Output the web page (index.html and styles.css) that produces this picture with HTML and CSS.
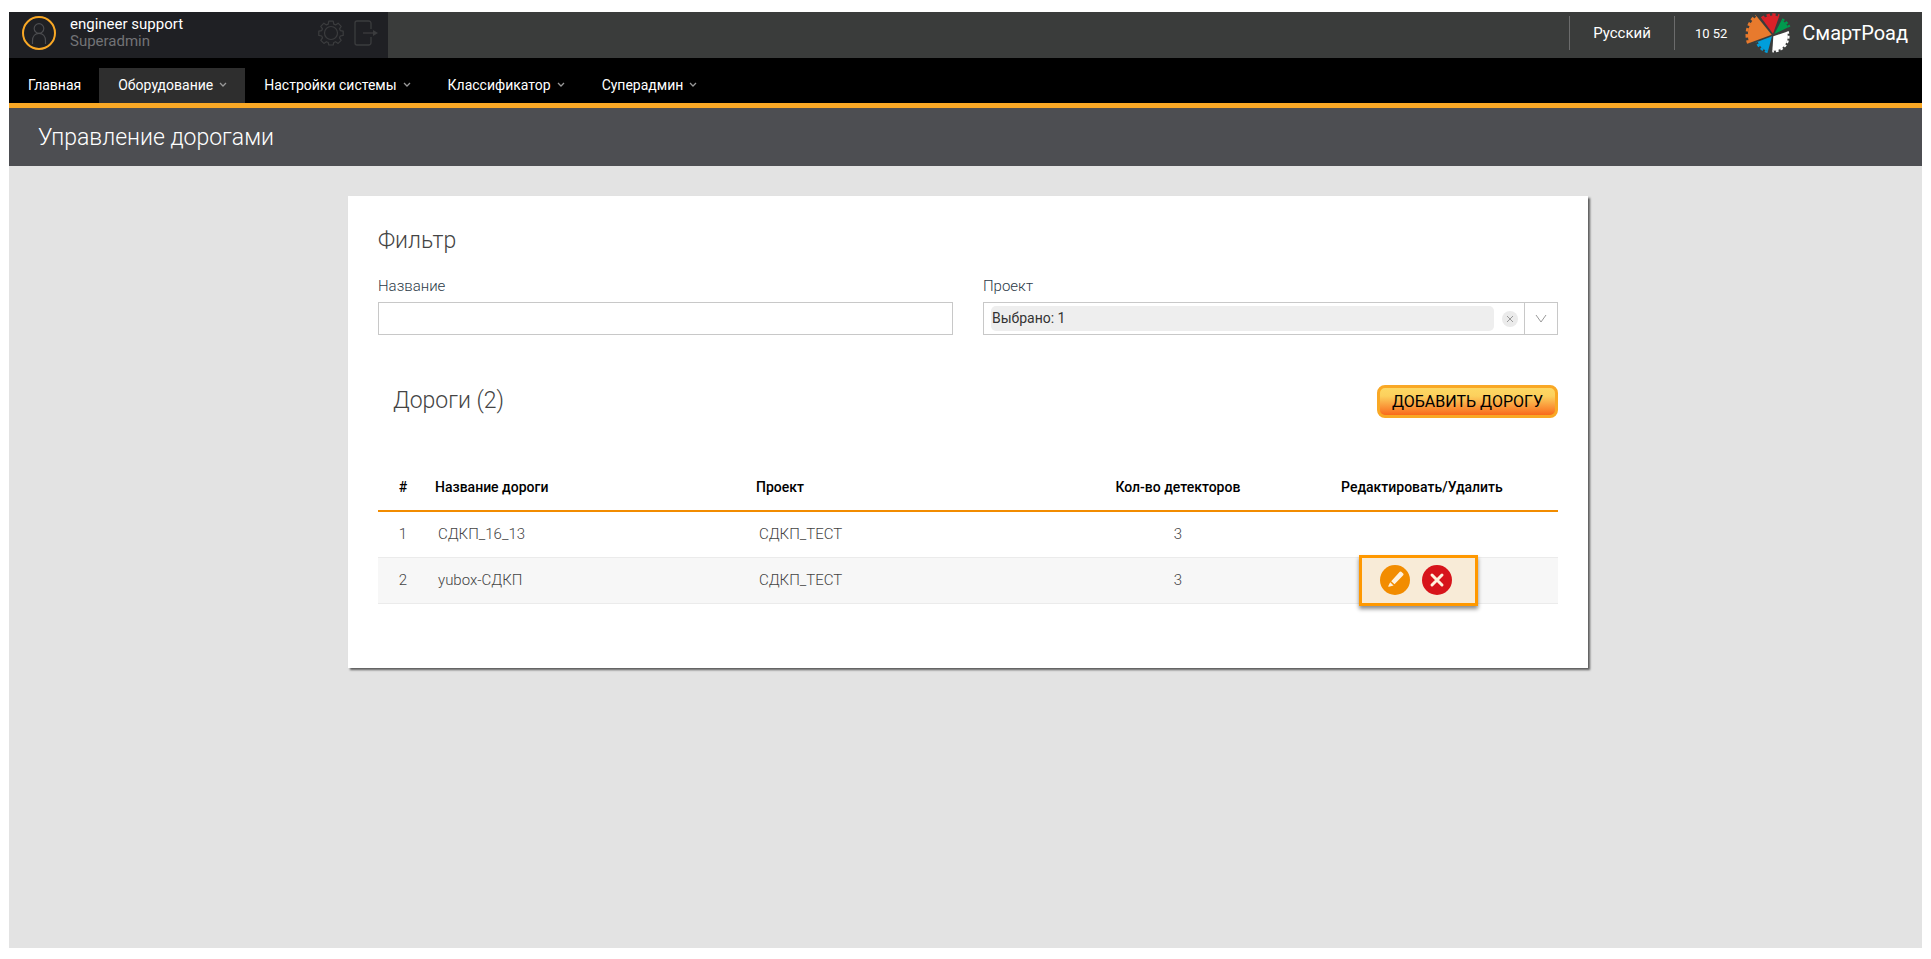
FILE: index.html
```html
<!DOCTYPE html>
<html lang="ru">
<head>
<meta charset="utf-8">
<title>Управление дорогами</title>
<link rel="stylesheet" href="styles.css">
</head>
<body>
<div class="page">
  <header class="topbar">
    <div class="user">
      <svg class="avatar" viewBox="0 0 34 34" width="34" height="34" fill="none" aria-hidden="true">
        <circle cx="17" cy="17" r="16" stroke="#f9a825" stroke-width="2"/>
        <g stroke="#4c4d50" stroke-width="1.2"><circle cx="17" cy="12.5" r="4.8"/><path d="M10.5 28v-3.200c0-4.500 2.700-7.500 6.500-7.500s6.500 3 6.500 7.500V28"/></g>
      </svg>
      <div class="user-text">
        <div class="user-name">engineer support</div>
        <div class="user-role">Superadmin</div>
      </div>
      <button class="icon-btn" type="button" aria-label="Настройки">
        <svg viewBox="0 0 26 26" width="26" height="26" fill="none" stroke="#3b3c3e" stroke-width="1.2" stroke-linejoin="round">
          <circle cx="13" cy="13" r="6.500"/>
          <path d="M10.800 1.200h4.400l.6 2.900 1.800.8 2.500-1.700 3.100 3.100-1.700 2.500.8 1.800 2.900.6v4.200l-2.900.6-.8 1.800 1.700 2.500-3.100 3.100-2.500-1.700-1.800.8-.6 2.500h-4.400l-.6-2.500-1.800-.8-2.500 1.700-3.100-3.100 1.700-2.500-.8-1.800-2.900-.6v-4.200l2.900-.6.8-1.800-1.700-2.500 3.100-3.100 2.500 1.700 1.800-.8z"/>
        </svg>
      </button>
      <button class="icon-btn" type="button" aria-label="Выход">
        <svg viewBox="0 0 26 26" width="26" height="26" fill="none" stroke="#3b3c3e" stroke-width="1.300">
          <path d="M18 9V3.500Q18 1 15.500 1H4Q2 1 2 3v20q0 2 2 2h11.500q2.500 0 2.500-2.500V17"/>
          <path d="M10 13h11"/><path d="M20 10l5 3-5 3z" fill="#3b3c3e" stroke="none"/>
        </svg>
      </button>
    </div>
    <button class="lang" type="button">Русский</button>
    <time class="clock" datetime="10:52">10 52</time>
    <a class="brand" href="#">
      <svg viewBox="0 0 141 120" width="47" height="40" fill="none" aria-hidden="true">
        <path d="M80 65L13 90A71 71 0 0 1 35 10z" fill="#e87a2d"/>
        <path d="M10 91A74 74 0 0 1 33 8" stroke="#e87a2d" stroke-width="8" stroke-dasharray="10 8"/>
        <path d="M84 62L52 19A54 54 0 0 1 102 11z" fill="#da2128"/>
        <path d="M50 16A57 57 0 0 1 103 8" stroke="#da2128" stroke-width="8" stroke-dasharray="10 7"/>
        <path d="M88 63L110 21A47 47 0 0 1 130 43z" fill="#009a4e"/>
        <path d="M111 19A50 50 0 0 1 133 42" stroke="#009a4e" stroke-width="7" stroke-dasharray="8 5"/>
        <path d="M85 70L126 56A43 43 0 0 1 82 113z" fill="#fff"/>
        <path d="M128 55A45 45 0 0 1 82 115" stroke="#fff" stroke-width="6" stroke-dasharray="8 6"/>
        <path d="M81 70L69 114A46 46 0 0 1 38 86z" fill="#009edb"/>
        <path d="M68 117A49 49 0 0 1 35 87" stroke="#009edb" stroke-width="7" stroke-dasharray="9 6"/>
      </svg>
      <span>СмартРоад</span>
    </a>
  </header>

  <nav class="nav">
    <a class="nav-item" href="#">Главная</a>
    <a class="nav-item active" href="#" aria-current="page">Оборудование<svg class="chev" viewBox="0 0 8 6" width="8" height="6"><path d="M1 1l3 3 3-3"/></svg></a>
    <a class="nav-item" href="#">Настройки системы<svg class="chev" viewBox="0 0 8 6" width="8" height="6"><path d="M1 1l3 3 3-3"/></svg></a>
    <a class="nav-item" href="#">Классификатор<svg class="chev" viewBox="0 0 8 6" width="8" height="6"><path d="M1 1l3 3 3-3"/></svg></a>
    <a class="nav-item" href="#">Суперадмин<svg class="chev" viewBox="0 0 8 6" width="8" height="6"><path d="M1 1l3 3 3-3"/></svg></a>
  </nav>

  <div class="titlebar"><h1>Управление дорогами</h1></div>

  <main class="main">
    <section class="card">
      <h2>Фильтр</h2>
      <div class="filters">
        <div class="field">
          <label for="name">Название</label>
          <input class="control" id="name" type="text">
        </div>
        <div class="field">
          <label for="project">Проект</label>
          <div class="control picker">
            <select id="project"><option>Выбрано: 1</option></select>
            <button class="clear" type="button" aria-label="Очистить">
              <svg viewBox="0 0 16 16" width="16" height="16"><path d="M5 5l6 6M11 5l-6 6"/></svg>
            </button>
            <button class="caret" type="button" aria-label="Открыть список">
              <svg viewBox="0 0 12 10" width="12" height="10"><path d="M1 1l5 7 5-7"/></svg>
            </button>
          </div>
        </div>
      </div>

      <div class="list-head">
        <h2>Дороги (2)</h2>
        <button class="add" type="button">ДОБАВИТЬ ДОРОГУ</button>
      </div>

      <table class="roads">
        <colgroup><col class="c-num"><col class="c-name"><col class="c-project"><col class="c-count"><col class="c-actions"></colgroup>
        <thead>
          <tr><th class="mid">#</th><th>Название дороги</th><th>Проект</th><th class="mid">Кол-во детекторов</th><th class="mid">Редактировать/Удалить</th></tr>
        </thead>
        <tbody>
          <tr><td class="mid">1</td><td>СДКП_16_13</td><td>СДКП_ТЕСТ</td><td class="mid">3</td><td></td></tr>
          <tr>
            <td class="mid">2</td><td>yubox-СДКП</td><td>СДКП_ТЕСТ</td><td class="mid">3</td>
            <td class="mid">
              <div class="actions">
                <button class="round edit" type="button" aria-label="Редактировать">
                  <svg viewBox="0 0 30 30" width="30" height="30"><path d="M11.200 16.200L19.800 6.800Q20.500 6 21.300 6.800L23.200 8.600Q24 9.400 23.200 10.200L14.500 19.300z"/><path d="M10.200 17.200l3.400 3.200-4.700 1.400q-.9.200-.6-.7z"/></svg>
                </button>
                <button class="round remove" type="button" aria-label="Удалить">
                  <svg viewBox="0 0 30 30" width="30" height="30"><path d="M10 10l10 10M20 10L10 20"/></svg>
                </button>
                <span class="highlight"></span>
              </div>
            </td>
          </tr>
        </tbody>
      </table>
    </section>
  </main>
</div>
</body>
</html>
```
FILE: styles.css
```css
* { box-sizing: border-box; }

body {
  margin: 12px 9px 11px;
  background: #fff;
  color: #444;
  font-family: Roboto, "Noto Sans", sans-serif;
  font-size: 14px;
}

button, input, select { font: inherit; color: inherit; margin: 0; }
button { padding: 0; border: 0; background: none; cursor: pointer; }
a { color: inherit; text-decoration: none; }
svg { display: block; }
h1, h2 { margin: 0; font-size: 23px; line-height: 28px; font-weight: 300; }

.page {
  display: flex;
  flex-direction: column;
  min-height: calc(100vh - 23px);
  background: #e3e3e3;
}

.topbar {
  display: flex;
  align-items: center;
  height: 46px;
  padding-right: 14px;
  background: #3a3c3b;
  color: #fff;
}
.user {
  display: flex;
  align-items: center;
  width: 379px;
  height: 100%;
  margin-right: auto;
  padding: 0 9px 4px 13px;
  background: #1f2024;
}
.user-text { flex: 1; padding-left: 14px; line-height: 17px; font-size: 15px; }
.user-role { color: #727376; }
.icon-btn { margin-left: 9px; }
.lang {
  height: 34px;
  padding: 0 23px;
  margin-bottom: 4px;
  border: solid #6b6c6c;
  border-width: 0 1px;
  font-size: 15px;
}
.clock { padding: 0 18px 0 20px; margin-bottom: 4px; font-size: 13px; }
.brand { display: flex; align-items: center; gap: 10px; margin-bottom: 4px; font-size: 20px; }

.nav {
  display: flex;
  align-items: flex-end;
  height: 50px;
  border-bottom: 5px solid #f9a825;
  background: #000;
  color: #fff;
}
.nav-item {
  display: flex;
  align-items: center;
  gap: 6px;
  height: 35px;
  padding: 0 18px 2px 19px;
}
.nav-item.active { background: #2e2e2e; }
.chev { fill: none; stroke: #999; stroke-width: 1.300; }

.titlebar { padding: 16px 29px 14px; background: #4d4e52; color: #fff; }

.main { flex: 1; padding: 30px 10px 30px 15px; }
.card {
  max-width: 1240px;
  margin: 0 auto;
  padding: 31px 30px 64px;
  background: #fff;
  box-shadow: 2px 2px 2px rgba(0, 0, 0, .6);
}
.filters { display: grid; grid-template-columns: 1fr 1fr; gap: 30px; margin-top: 22px; }
.field { display: flex; flex-direction: column; gap: 7px; color: #2c3a47; font-weight: 300; }
.field label { line-height: 18px; font-size: 15px; }
.control { width: 100%; height: 33px; border: 1px solid #c8c8c8; background: #fff; }
input.control { padding: 0 8px; }
.picker { display: flex; align-items: center; padding-left: 7px; }
.picker select {
  flex: 1;
  min-width: 0;
  height: 25px;
  padding: 0 1px 2px;
  border: 0;
  border-radius: 5px;
  appearance: none;
  background: #eee;
  color: #333;
  font-weight: 400;
}
.clear { margin: 0 6px 0 8px; border-radius: 50%; background: #ebebeb; }
.clear svg, .caret svg { fill: none; stroke: #999; stroke-width: 1; }
.caret {
  display: flex;
  align-items: center;
  justify-content: center;
  width: 33px;
  height: 100%;
  border-left: 1px solid #c8c8c8;
}

.list-head {
  display: flex;
  align-items: flex-start;
  justify-content: space-between;
  margin-top: 50px;
  padding-left: 15px;
}
.list-head h2 { padding-top: 2px; }
.add {
  height: 33px;
  padding: 0 12px;
  border: 3px solid #f9a825;
  border-radius: 8px;
  background: linear-gradient(#fdd864 0%, #fcd05d 30%, #f96a1c 100%);
  color: #000;
  font-size: 16px;
}

.roads { width: 100%; margin-top: 45px; border-collapse: collapse; table-layout: fixed; }
.c-num { width: 50px; }
.c-name, .c-project { width: 27.2%; }
.c-count { width: 18.3%; }
.roads th {
  height: 48px;
  padding: 0 7px;
  border-bottom: 2px solid #f28c00;
  color: #000;
  font-weight: 500;
  text-align: left;
}
.roads td {
  height: 46px;
  padding: 0 10px;
  border-bottom: 1px solid #ebebeb;
  font-size: 15px;
  font-weight: 300;
}
.roads tbody tr:nth-child(even) { background: #f7f7f7; }
.roads .mid { padding: 0; text-align: center; }

.actions { position: relative; display: inline-flex; vertical-align: middle; }
.round { margin-right: 12px; border-radius: 50%; }
.edit { background: #f08a00; }
.edit svg { fill: #fff; }
.remove { background: #d2001f; }
.remove svg { fill: none; stroke: #fff; stroke-width: 3; stroke-linecap: round; }
.highlight {
  position: absolute;
  inset: -10px -14px -11px -21px;
  border: 3px solid #ff9800;
  background: rgba(255, 152, 0, .13);
  box-shadow: 0 3px 4px rgba(0, 0, 0, .45);
  pointer-events: none;
}
```
